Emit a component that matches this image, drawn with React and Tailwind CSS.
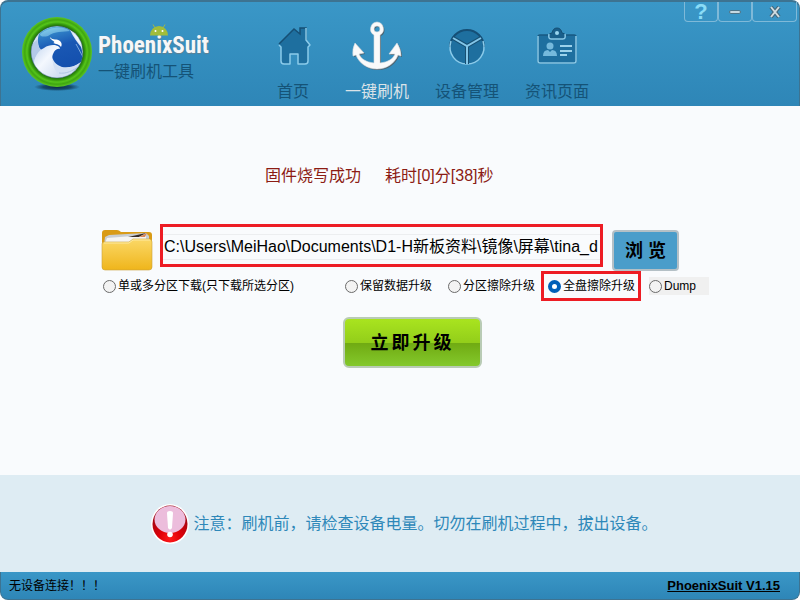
import { useState } from 'react';

const fontClass = "font-['Liberation_Sans','Noto_Sans_CJK_SC',sans-serif]";

const radioClass = [
    'm-0 h-[13px] w-[13px] shrink-0 appearance-none rounded-full',
    'border border-[#6b6b6b] bg-[#f3f3f3]',
    'checked:border-4 checked:border-[#005fb8] checked:bg-white',
].join(' ');

const windowButtonClass = 'flex h-5 items-center justify-center rounded-b-sm border border-t-0 border-[#7fb9d8]';

function PhoenixLogo() {
    return (
        <svg className="h-[76px] w-[72px] shrink-0" viewBox="-1 -1 72 76" aria-hidden="true">
            <defs>
                <radialGradient id="ring" cx="35" cy="35" r="35" gradientUnits="userSpaceOnUse">
                    <stop offset="0.7" stopColor="#1d5c06" />
                    <stop offset="0.79" stopColor="#2f8f0c" />
                    <stop offset="0.86" stopColor="#55c51a" />
                    <stop offset="0.92" stopColor="#3fa611" />
                    <stop offset="1" stopColor="#5cc722" />
                </radialGradient>
                <linearGradient id="globe" x1="0.2" y1="0" x2="0.5" y2="1">
                    <stop offset="0" stopColor="#6cc4e6" />
                    <stop offset="0.2" stopColor="#2f7fc6" />
                    <stop offset="0.5" stopColor="#1a58b4" />
                    <stop offset="1" stopColor="#1450ae" />
                </linearGradient>
                <linearGradient id="wing" x1="0" y1="0" x2="1" y2="1">
                    <stop offset="0" stopColor="#c3d6f0" />
                    <stop offset="0.4" stopColor="#f4f8fe" />
                    <stop offset="1" stopColor="#c5d4ec" />
                </linearGradient>
                <radialGradient id="logoShadow">
                    <stop offset="0" stopColor="#0b2c44" />
                    <stop offset="0.6" stopColor="#0f3a58" stopOpacity="0.8" />
                    <stop offset="1" stopColor="#0f3a58" stopOpacity="0" />
                </radialGradient>
                <clipPath id="disc">
                    <circle cx="35" cy="35" r="26" />
                </clipPath>
            </defs>
            <ellipse cx="35" cy="70" rx="23" ry="4" fill="url(#logoShadow)" />
            <circle cx="35" cy="35" r="35" fill="url(#ring)" />
            <g clipPath="url(#disc)">
                <circle cx="35" cy="35" r="26" fill="#d6e3f5" />
                {/* blue field behind the bird */}
                <path d="M17 17C24 9 40 7 48 13C51 20 56 26 59 30C61 36 61 42 59 45C53 50 45 51 40 50C34 48 30 43 30 38L18 33C16 28 15 22 17 17Z" fill="url(#globe)" />
                <path d="M18 17C28 9 43 9 48 14C42 15 32 14 26 19C22 20 18 20 18 17Z" fill="#a5e4f5" opacity="0.5" />
                <path d="M50 13C52 20 56 26 61 29L62 24L54 12Z" fill="#eaf3fc" />
                <path d="M54 27L61 40" stroke="#7ea9df" strokeWidth="1" />
                {/* bird */}
                <path d="M9 28L16 22C15 28 17 31 20 33C14 38 11 43 12 50L7 42Z" fill="#b3c9e9" />
                <path d="M12 53C11 42 15 34 22 31C29 26 38 28 38 32C34 31 31 35 30 41C31 49 35 57 43 61L34 63L20 60Z" fill="url(#wing)" />
                <path d="M31 46C37 53 50 53 60 44C58 56 49 62 42 61C36 58 32 53 31 46Z" fill="#d3e0f3" />
                <path d="M37 56C44 57 51 54 57 49" fill="none" stroke="#b0c4e3" />
                <path d="M28 20C31 24 35 21 38 24C40 26 40 28 39 30C37 27 34 27 31 26C34 25 31 24 30 23Q28 22 28 20Z" fill="#fff" />
            </g>
            <circle cx="35" cy="35" r="26" fill="none" stroke="#2b5b72" strokeWidth="1" opacity="0.5" />
        </svg>
    );
}

function AndroidHead() {
    return (
        <svg className="absolute left-[51px] -top-[4px] h-3 w-5" viewBox="0 0 20 12" aria-hidden="true">
            <path d="M6 4L4 0.5M14 4L16 0.5" stroke="#a0b84a" strokeWidth="1" />
            <path d="M1 11.5A9 9.5 0 0 1 19 11.5Z" fill="#a2bd3a" />
            <circle cx="6.5" cy="7" r="1" fill="#fff" />
            <circle cx="13.5" cy="7" r="1" fill="#fff" />
        </svg>
    );
}

function HomeIcon() {
    return (
        <svg className="h-[52px] w-[52px]" viewBox="0 0 52 52" fill="none" aria-hidden="true">
            <path d="M12 24L27 9L33 14V8H39V20L43 25L41 27V41Q41 44 38 44H31V34H23V44H17Q14 44 14 41V27Z" fill="#1e6f9f" />
            <path d="M12 24L27 9L33 14V8H39V20" stroke="#164f74" strokeWidth="1.5" />
            <path d="M39 8V20L43 25L41 27V41Q41 44 38 44H31V34H23V44H17Q14 44 14 41V27L12 25" stroke="#8bcbea" strokeWidth="1.5" strokeLinejoin="round" />
        </svg>
    );
}

function AnchorIcon() {
    return (
        <svg className="h-[52px] w-[52px]" viewBox="0 0 52 52" aria-hidden="true">
            <defs>
                <path id="anchor" fillRule="evenodd" d="M26 2A7 7 0 0 1 29 15V43C37 42 42 39 44 34L38 34L46 23Q50 29 50 36L47 35C44 43 36 49 26 49C16 49 8 43 5 35L2 36Q1 29 4 23L13 33L8 34C10 39 15 42 23 43V15A7 7 0 0 1 26 2ZM26 6A3 3 0 1 0 26 12A3 3 0 1 0 26 6Z" />
            </defs>
            <use href="#anchor" x="1" y="1" fill="#4c626e" />
            <use href="#anchor" fill="#fafafa" stroke="#d5dce0" strokeWidth="0.6" />
        </svg>
    );
}

function DeviceIcon() {
    return (
        <svg className="h-[52px] w-[52px]" viewBox="0 0 52 52" fill="none" aria-hidden="true">
            <circle cx="26" cy="27" r="17" fill="#1e6f9f" />
            <path d="M9 27A17 17 0 0 1 43 27" stroke="#154f76" strokeWidth="2" />
            <path d="M10 21C6 34 15 44 26 44S46 34 42 21" stroke="#8bcbea" strokeWidth="1.5" />
            <path d="M12 18L26 26L40 18M26 26V44" stroke="#174f72" strokeWidth="4" />
            <path d="M12 18L26 26L40 18M26 26V44" stroke="#83c6e8" strokeWidth="2" />
        </svg>
    );
}

function NewsIcon() {
    return (
        <svg className="h-[52px] w-[52px]" viewBox="0 0 52 52" fill="none" aria-hidden="true">
            <rect x="7" y="15" width="38" height="28" rx="2" fill="#1e6f9f" stroke="#195a82" strokeWidth="1.5" />
            <path d="M7 16V41Q7 43 9 43H43Q45 43 45 41V16" stroke="#8bcbea" strokeWidth="1.5" />
            <path d="M19 19Q15 14 21 13Q22 8 26 8T31 13Q37 14 33 19Z" fill="#195f8b" stroke="#154f74" />
            <path d="M18 14Q17 19 20 19H32Q35 19 34 14" stroke="#8bcbea" strokeWidth="1.5" />
            <circle cx="26" cy="13" r="2" fill="#9ad5ef" />
            <circle cx="19" cy="26" r="3.5" fill="#75b9dc" />
            <path d="M12 36Q12 30 17 30L19 32L21 30Q26 30 26 36Z" fill="#75b9dc" />
            <path d="M29 26H41M29 31H41M29 35H36" stroke="#9bd2eb" strokeWidth="2" />
        </svg>
    );
}

function FolderIcon() {
    return (
        <svg className="h-[42px] w-[52px] shrink-0" viewBox="0 0 52 42" aria-hidden="true">
            <defs>
                <linearGradient id="folder" x1="0" y1="0" x2="0" y2="1">
                    <stop offset="0" stopColor="#fbd867" />
                    <stop offset="1" stopColor="#efb51b" />
                </linearGradient>
            </defs>
            <path d="M1 4Q1 1 4 1H16Q18 1 20 3H48Q51 3 51 6V39H1Z" fill="#d99b16" />
            <path d="M4 8L8 6L45 4L48 7V16H3Z" fill="#c9ced3" />
            <path d="M6 9L45 6V14H4Z" fill="#f5f5f3" />
            <path d="M27 8L45 4L38 8Z" fill="#352b26" />
            <path d="M38 8L46 4L44 8Z" fill="#d98555" />
            <path d="M1 15Q1 13 3 13H28L32 10H48Q51 10 51 13V38Q51 41 48 41H4Q1 41 1 38Z" fill="url(#folder)" stroke="#c9a23d" strokeWidth="0.6" />
            <path d="M3 14H28L32 11H49" fill="none" stroke="#fdeaa2" />
        </svg>
    );
}

function WarningIcon() {
    return (
        <svg className="h-[40px] w-[38px] shrink-0" viewBox="0 0 38 40" aria-hidden="true">
            <defs>
                <radialGradient id="warning" cx="0.5" cy="0.9" r="0.75">
                    <stop offset="0" stopColor="#ff1a1a" />
                    <stop offset="0.4" stopColor="#e00008" />
                    <stop offset="1" stopColor="#9c0714" />
                </radialGradient>
            </defs>
            <ellipse cx="19" cy="20" rx="19" ry="20" fill="#fff" />
            <ellipse cx="19" cy="20" rx="17.5" ry="18.5" fill="url(#warning)" />
            <ellipse cx="19" cy="15.500" rx="15.500" ry="13.500" fill="#ecbddc" />
            <path d="M16 9Q16 7 19 7T22 9L21 24Q19 27 17 24Z" fill="#fff" />
            <circle cx="19" cy="30.5" r="2.8" fill="#fff" />
        </svg>
    );
}

const tabs = [
    { label: '首页', icon: HomeIcon, width: 'w-[52px]' },
    { label: '一键刷机', icon: AnchorIcon, width: 'w-16', active: true },
    { label: '设备管理', icon: DeviceIcon, width: 'w-16' },
    { label: '资讯页面', icon: NewsIcon, width: 'w-16' },
];

const modes = [
    { id: 'partition', label: '单或多分区下载(只下载所选分区)', className: 'w-[242px]' },
    { id: 'keep', label: '保留数据升级', className: 'w-[103px]' },
    { id: 'erase-partition', label: '分区擦除升级', className: 'w-[93px]' },
    { id: 'erase-all', label: '全盘擦除升级', className: 'mr-2 h-[30px] w-[100px] border-[3px] border-[#ed1c24] pl-1' },
    { id: 'dump', label: 'Dump', className: 'h-[18px] w-[60px] bg-[#f0f0f0]' },
];

function Header() {
    return (
        <header className="flex h-[106px] items-start rounded-t-lg border-x border-t-2 border-[#3d7391] bg-linear-to-b from-[#3a97c7] to-[#2e86b7]">
            <div className="flex w-[266px] shrink-0 pl-5 pt-[14px]">
                <PhoenixLogo />
                <div className="relative ml-[5px] mt-3 whitespace-nowrap">
                    <AndroidHead />
                    <h1 className="font-['Roboto_Condensed','Roboto',sans-serif] text-[23px] leading-9 font-bold text-[#f6f7f8] [text-shadow:0_1px_1px_#667f8c]">PhoenixSuit</h1>
                    <p className="-mt-0.5 text-base leading-5 text-[#155377]">一键刷机工具</p>
                </div>
            </div>
            <nav className="flex gap-[26px] pt-[18px]">
                {tabs.map(({ label, icon: Icon, width, active }) => (
                    <a
                        key={label}
                        href="#"
                        className={`flex flex-col items-center gap-[10px] whitespace-nowrap text-base leading-5 ${width} ${active ? 'text-[#dbe3e8]' : 'text-[#155377]'}`}
                    >
                        <Icon />
                        {label}
                    </a>
                ))}
            </nav>
            <div className="ml-auto mr-[2px] flex">
                <button type="button" aria-label="帮助" className={`${windowButtonClass} w-[34px] text-[22px] leading-none font-bold text-[#8adcf6]`}>?</button>
                <button type="button" aria-label="最小化" className={`${windowButtonClass} w-[34px]`}>
                    <span className="h-1 w-3 rounded-xs border border-[#4d7488] bg-[#c6d9e2]" />
                </button>
                <button type="button" aria-label="关闭" className={`${windowButtonClass} w-[45px]`}>
                    <svg className="h-3 w-3" viewBox="0 0 12 12" aria-hidden="true">
                        <path d="M2 1L10 11M10 1L2 11" stroke="#44677a" strokeWidth="4" />
                        <path d="M2 1L10 11M10 1L2 11" stroke="#d0dce0" strokeWidth="2" />
                    </svg>
                </button>
            </div>
        </header>
    );
}

export default function App() {
    const [mode, setMode] = useState('erase-all');
    const [path, setPath] = useState('C:\\Users\\MeiHao\\Documents\\D1-H新板资料\\镜像\\屏幕\\tina_d');

    return (
        <div className={`flex min-h-screen flex-col bg-white ${fontClass}`}>
            <Header />

            <main className="flex-1 bg-[#f9fbfd]">
                <p className="pl-[265px] pt-[60px] text-base leading-5 text-[#8c1c14]">
                    固件烧写成功<span className="ml-6">耗时[0]分[38]秒</span>
                </p>

                {/* Firmware file */}
                <div className="mt-[38px] flex items-start pl-[101px] pr-[121px]">
                    <div className="pt-[5px]">
                        <FolderIcon />
                    </div>
                    <div className="ml-[7px] flex h-[43px] min-w-0 flex-1 border-[3px] border-[#ed1c24] pb-1 pt-[7px]">
                        <input
                            type="text"
                            aria-label="固件路径"
                            value={path}
                            onChange={(e) => setPath(e.target.value)}
                            className="w-full border-y border-[#eceef0] bg-transparent pl-px text-base text-black outline-none"
                        />
                    </div>
                    <button
                        type="button"
                        className="ml-[9px] mt-[6px] h-[41px] w-[67px] rounded-sm border-2 border-[#b4c0c6] bg-[#4a9dca] text-lg font-bold text-black"
                    >
                        浏 览
                    </button>
                </div>

                {/* Upgrade mode */}
                <div role="radiogroup" aria-label="升级模式" className="flex h-[30px] items-center pl-[103px]">
                    {modes.map(({ id, label, className }) => (
                        <label key={id} htmlFor={id} className={`flex shrink-0 items-center gap-[2px] whitespace-nowrap text-xs text-black ${className}`}>
                            <input
                                id={id}
                                type="radio"
                                name="mode"
                                checked={mode === id}
                                onChange={() => setMode(id)}
                                className={radioClass}
                            />
                            {label}
                        </label>
                    ))}
                </div>

                <div className="mt-4 flex justify-center pl-[25px]">
                    <button
                        type="button"
                        className="h-[51px] w-[139px] rounded-md border-2 border-[#b9cbb5] bg-[linear-gradient(#a9e41f,#93ce1a_50%,#70aa12_51%,#84c92c)] text-lg font-bold tracking-[3px] text-black"
                    >
                        立即升级
                    </button>
                </div>
            </main>

            <section className="flex h-[97px] items-center justify-center gap-1 bg-[#deecf3] pl-[9px] text-base text-[#2e88b9]">
                <WarningIcon />
                <p>注意：刷机前，请检查设备电量。切勿在刷机过程中，拔出设备。</p>
            </section>

            <footer className="flex h-7 items-center justify-between rounded-b-lg border-x border-b border-[#3d7391] bg-linear-to-b from-[#3a97c7] to-[#2e86b7] pl-2 pr-[19px] text-xs text-black">
                <span>无设备连接！！！</span>
                <a href="#" className="text-[13px] font-bold underline">PhoenixSuit V1.15</a>
            </footer>
        </div>
    );
}
